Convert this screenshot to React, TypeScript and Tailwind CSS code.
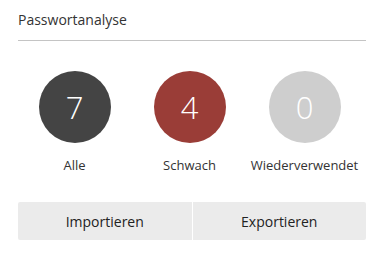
export default function App() {
  const stats = [
    { value: 7, label: 'Alle', color: 'bg-[#444444]' },
    { value: 4, label: 'Schwach', color: 'bg-[#9a3d37]' },
    { value: 0, label: 'Wiederverwendet', color: 'bg-[#cecece]' },
  ];

  return (
    <div className="w-[375px] h-[264px] bg-white font-['Open_Sans',sans-serif] text-[#333333]">
      <div className="pl-[18px] pr-[9px] pt-[10px]">
        <h2 className="text-[14px] leading-[20px] pb-[10px] border-b border-[#c4c4c4]">Passwortanalyse</h2>
      </div>
      <div className="grid grid-cols-3 w-[345px] ml-[17px] mt-[30px]">
        {stats.map((s) => (
          <div key={s.label} className="flex flex-col items-center">
            <div className={`w-[72px] h-[72px] rounded-full ${s.color} flex items-center justify-center text-white text-[31px] font-light`}>
              {s.value}
            </div>
            <span className="mt-[13px] text-[13px] leading-[18px]">{s.label}</span>
          </div>
        ))}
      </div>
      <div className="flex gap-px ml-[18px] mr-[9px] mt-[28px]">
        <button className="flex-1 h-[38px] bg-[#ebebeb] rounded-l-[2px] text-[14px] text-[#222222]">Importieren</button>
        <button className="flex-1 h-[38px] bg-[#ebebeb] rounded-r-[2px] text-[14px] text-[#222222]">Exportieren</button>
      </div>
    </div>
  );
}
